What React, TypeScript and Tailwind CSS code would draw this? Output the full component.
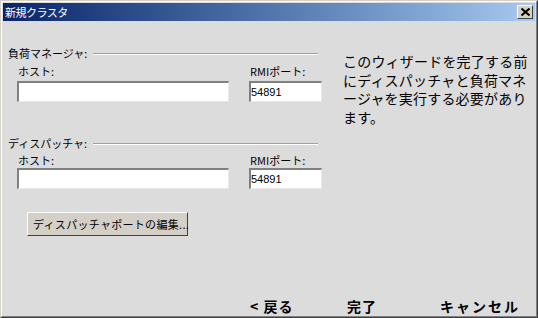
const jp = { fontFamily: '"Noto Sans CJK JP", "Noto Sans", sans-serif' };

const SectionHeader = ({ label }: { label: string }) => (
  <div className="flex items-center h-[13px] gap-[6px]">
    <span className="text-[11px] leading-[13px] text-black whitespace-nowrap">{label}</span>
    <div className="flex-1 border-t border-t-[#a0a0a0] border-b border-b-white" />
  </div>
);

const Field = ({ label, width }: { label: string; width: string }) => (
  <div className={"shrink-0 flex flex-col " + width}>
    <span className="pl-px text-[11px] leading-[13px] text-black whitespace-nowrap">{label}</span>
  </div>
);

const Box = ({ value, width }: { value?: string; width: string }) => (
  <div
    className={
      "shrink-0 h-[21px] bg-white border-t-2 border-l-2 border-t-[#808080] border-l-[#808080] border-r border-b border-r-[#e8e8e8] border-b-[#e8e8e8] flex items-center " +
      width
    }
  >
    <span className="text-[11px] leading-[14px] text-black" style={{ fontFamily: '"Liberation Sans", sans-serif' }}>
      {value}
    </span>
  </div>
);

const Group = ({ title, labelGap, boxGap, top }: { title: string; labelGap: string; boxGap: string; top: string }) => (
  <div className={top}>
    <SectionHeader label={title} />
    <div className={"pl-[9px] flex gap-[20px] " + labelGap}>
      <Field label="ホスト:" width="w-[212px]" />
      <Field label="RMIポート:" width="w-[73px]" />
    </div>
    <div className={"pl-[9px] flex gap-[20px] " + boxGap}>
      <Box width="w-[212px]" />
      <Box width="w-[73px]" value="54891" />
    </div>
  </div>
);

export default function App() {
  return (
    <div
      className="w-[538px] h-[318px] border border-t-[#d4d0c8] border-l-[#d4d0c8] border-r-[#404040] border-b-[#404040]"
      style={jp}
    >
      <div className="h-full border border-t-white border-l-white border-r-[#808080] border-b-[#808080] bg-[#dcdcdc] p-px flex flex-col">
        {/* title bar */}
        <div className="h-[18px] shrink-0 bg-gradient-to-r from-[#0a246a] to-[#a6caf0] flex items-center justify-between pl-[2px] pr-[2px]">
          <span className="text-white text-[11px] leading-[14px] tracking-[-0.5px]">新規クラスタ</span>
          <div className="w-[16px] h-[14px] bg-[#d4d0c8] border border-t-white border-l-white border-r-[#404040] border-b-[#404040] flex items-center justify-center">
            <svg width="9" height="8" viewBox="0 0 9 8">
              <path d="M0.5 0.5 L8.5 7.5 M8.5 0.5 L0.5 7.5" stroke="black" strokeWidth="2" />
            </svg>
          </div>
        </div>

        {/* body */}
        <div className="flex flex-1">
          <div className="w-[315px] shrink-0 pl-[5px] pt-[26px] flex flex-col">
            <Group title="負荷マネージャ:" top="" labelGap="mt-[5px]" boxGap="mt-[3px]" />
            <Group title="ディスパッチャ:" top="mt-[35px]" labelGap="mt-[4px]" boxGap="mt-[1px]" />
            <div className="mt-[23px] ml-[19px]">
              <div className="w-[161px] h-[24px] bg-[#d4d0c8] border border-t-white border-l-white border-r-[#404040] border-b-[#404040] flex items-center pl-[5px]">
                <span className="text-[11px] leading-[13px] text-black whitespace-nowrap tracking-[0.3px]">
                  ディスパッチャポートの編集...
                </span>
              </div>
            </div>
          </div>
          <div className="pl-[25px] pt-[31px] text-[14px] leading-[18.5px] tracking-[0.2px] text-black">
            <p>このウィザードを完了する前</p>
            <p>にディスパッチャと負荷マネ</p>
            <p>ージャを実行する必要があり</p>
            <p>ます。</p>
          </div>
        </div>

        {/* footer buttons */}
        <div className="h-[16px] mb-[1px] flex pl-[247px] text-[14px] leading-[16px] font-bold text-black">
          <span className="w-[97px] tracking-[1px]">&lt; 戻る</span>
          <span className="w-[93px] tracking-[1px]">完了</span>
          <span className="tracking-[2px]">キャンセル</span>
        </div>
      </div>
    </div>
  );
}
